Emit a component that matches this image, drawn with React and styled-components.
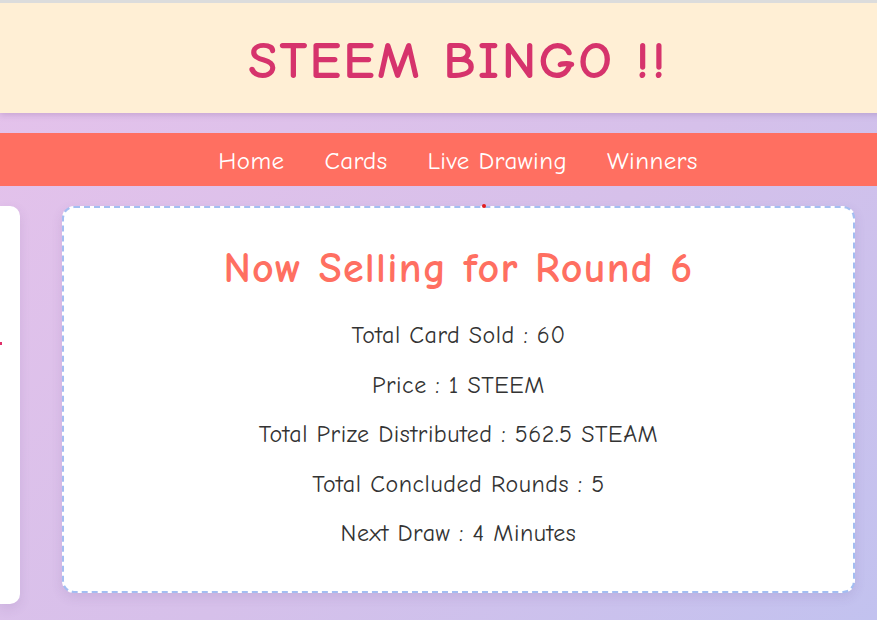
import React from "react";
import styled, { createGlobalStyle } from "styled-components";

const GlobalStyle = createGlobalStyle`
	html, body {
		margin: 0;
		padding: 0;
		overflow: hidden;
	}
	body {
		font-family: "Comic Sans MS", "Comic Neue", "Noto Sans", sans-serif;
		background: linear-gradient(135deg, #e6c2eb 0%, #d6c0ea 55%, #c2c2ef 100%);
		min-height: 100vh;
		border-top: 3px solid #dcdcdc;
	}
`;

const stats = [
	"Total Card Sold : 60",
	"Price : 1 STEEM",
	"Total Prize Distributed : 562.5 STEAM",
	"Total Concluded Rounds : 5",
	"Next Draw : 4 Minutes",
];

const links = ["Home", "Cards", "Live Drawing", "Winners"];

const App = () => {
	return (
		<>
			<GlobalStyle />
			<Page>
				<Header>
					<Title>STEEM BINGO !!</Title>
				</Header>
				<Nav>
					{links.map((l) => (
						<NavLink key={l}>{l}</NavLink>
					))}
				</Nav>
				<Main>
					<SideCard>
						<Marker />
					</SideCard>
					<InfoCard>
						<Dot />
						<CardTitle>Now Selling for Round 6</CardTitle>
						{stats.map((s) => (
							<Stat key={s}>{s}</Stat>
						))}
					</InfoCard>
				</Main>
			</Page>
		</>
	);
};

export default App;

const Page = styled.div`
	width: 916px;
	min-height: 100vh;
`;
const Header = styled.header`
	height: 110px;
	background-color: #ffefd5;
	display: flex;
	align-items: center;
	justify-content: center;
	box-shadow: 0 2px 6px rgba(120, 80, 140, 0.25);
`;
const Title = styled.h1`
	margin: 0;
	padding-top: 4px;
	font-size: 53px;
	font-weight: 700;
	letter-spacing: 2.3px;
	color: #d6336c;
`;
const Nav = styled.nav`
	margin-top: 20px;
	height: 53px;
	background-color: #ff6f61;
	display: flex;
	align-items: center;
	justify-content: center;
	gap: 40px;
`;
const NavLink = styled.a`
	color: #fff;
	font-size: 25px;
	letter-spacing: 0.4px;
	padding-top: 2px;
	cursor: pointer;
	text-decoration: none;
`;
const Main = styled.main`
	display: grid;
	grid-template-columns: 20px 1fr;
	gap: 42px;
	padding: 20px 61px 0 0;
	align-items: start;
`;
const SideCard = styled.div`
	position: relative;
	height: 398px;
	background: #fff;
	border-radius: 0 10px 10px 0;
	box-shadow: 0 4px 12px rgba(90, 60, 120, 0.12);
`;
const Marker = styled.span`
	position: absolute;
	left: 0;
	top: 136px;
	width: 2px;
	height: 3px;
	background: #e0306a;
`;
const InfoCard = styled.section`
	position: relative;
	box-sizing: border-box;
	height: 387px;
	background: #fff;
	border: 2px dashed #a3bef2;
	border-radius: 12px;
	box-shadow: 0 4px 12px rgba(90, 60, 120, 0.12);
	display: flex;
	flex-direction: column;
	align-items: center;
	padding-top: 36px;
	color: #333;
`;
const Dot = styled.span`
	position: absolute;
	top: -4px;
	left: 418px;
	width: 4px;
	height: 4px;
	border-radius: 50%;
	background: #e21b1b;
`;
const CardTitle = styled.h2`
	margin: 0 0 18px;
	font-size: 42px;
	font-weight: 700;
	letter-spacing: 1.3px;
	color: #ff6f61;
`;
const Stat = styled.p`
	margin: 0;
	font-size: 24px;
	letter-spacing: 0.55px;
	line-height: 49.5px;
`;
